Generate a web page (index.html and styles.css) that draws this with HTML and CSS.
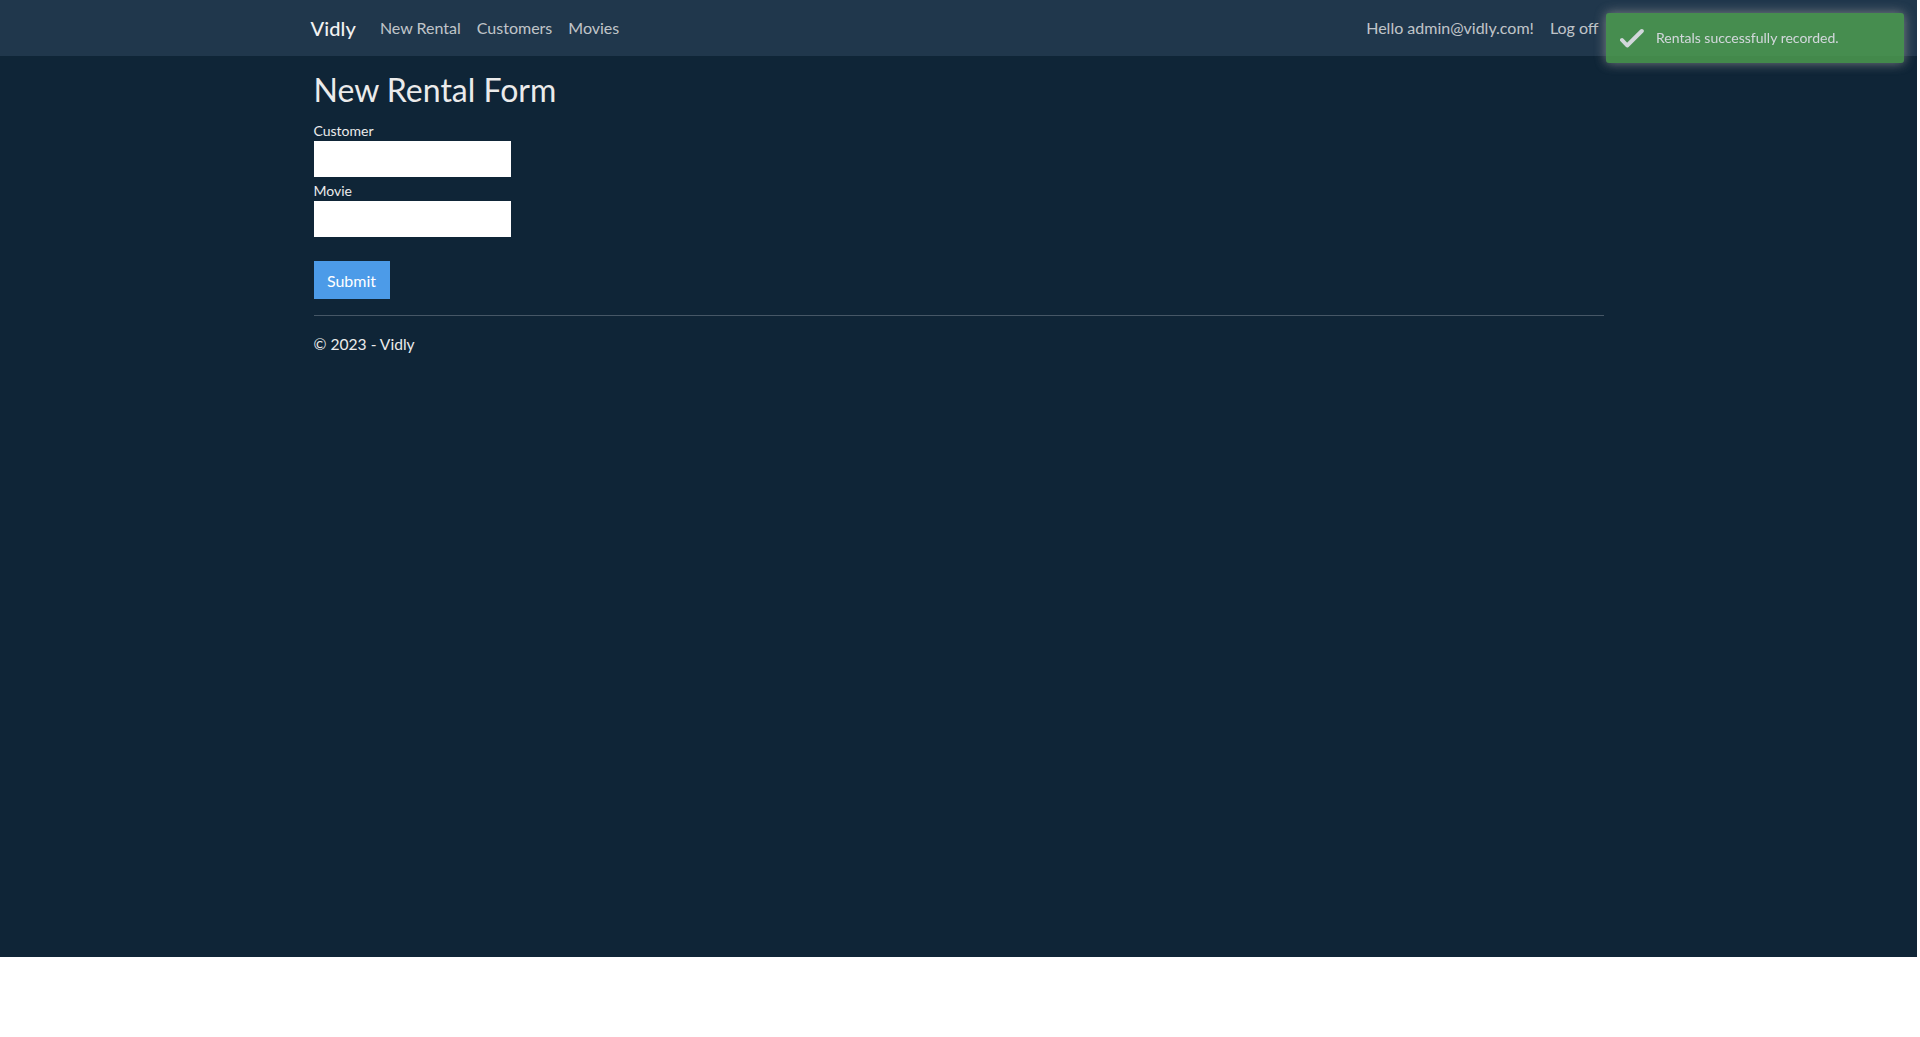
FILE: index.html
```html
<!DOCTYPE html>
<html lang="en">
<head>
<meta charset="utf-8">
<title>New Rental Form - Vidly</title>
<link rel="stylesheet" href="styles.css">
</head>
<body>
<div class="page">
  <nav class="navbar">
    <div class="nav-inner">
      <a class="brand" href="#">Vidly</a>
      <ul class="nav-links">
        <li><a href="#">New Rental</a></li>
        <li><a href="#">Customers</a></li>
        <li><a href="#">Movies</a></li>
      </ul>
      <ul class="nav-links nav-right">
        <li><a href="#">Hello admin@vidly.com!</a></li>
        <li><a href="#">Log off</a></li>
      </ul>
    </div>
  </nav>
  <main class="container">
    <h2 class="title">New Rental Form</h2>
    <form class="rental-form">
      <div class="field">
        <label for="customer">Customer</label>
        <input id="customer" type="text">
      </div>
      <div class="field">
        <label for="movie">Movie</label>
        <input id="movie" type="text">
      </div>
      <button type="button" class="btn-primary">Submit</button>
    </form>
    <hr class="rule">
    <footer class="footer">
      <p>© 2023 - Vidly</p>
    </footer>
  </main>
</div>
<div class="toast">
  <svg class="toast-icon" width="24" height="24" viewBox="0 0 24 24" aria-hidden="true">
    <polyline points="2,14 7.2,19.5 21.8,5" fill="none" stroke="#ffffff" stroke-width="4" stroke-linecap="round" stroke-linejoin="round"/>
  </svg>
  <span class="toast-text">Rentals successfully recorded.</span>
</div>
</body>
</html>
```

FILE: styles.css
```css
* { box-sizing: border-box; }

html, body {
  margin: 0;
  padding: 0;
  background: #ffffff;
}

body {
  font-family: Lato, "Open Sans", "Liberation Sans", sans-serif;
  font-size: 16px;
  line-height: 1.5;
  color: #ebebeb;
}

.page {
  width: 1917px;
  height: 957px;
  background: #0f2537;
}

/* Navbar */
.navbar {
  height: 56px;
  background: #20374c;
}

.nav-inner {
  width: 1290px;
  height: 100%;
  margin: 0 auto;
  display: flex;
  align-items: center;
}

.brand {
  font-size: 20px;
  color: #f2f2f2;
  text-decoration: none;
  margin-left: -3px;
  margin-right: 16px;
  font-weight: 500;
  letter-spacing: 0.1px;
}

.nav-links {
  list-style: none;
  margin: 0;
  padding: 0;
  display: flex;
}

.nav-links a {
  display: block;
  padding: 0 8px;
  color: rgba(235, 235, 235, 0.8);
  text-decoration: none;
  font-size: 16px;
}

.nav-right {
  margin-left: auto;
  margin-right: -3px;
}

/* Main content */
.container {
  width: 1290px;
  margin: 0 auto;
}

.title {
  margin: 15px 0 11px;
  font-size: 32px;
  font-weight: 400;
  line-height: 1.2;
  color: #ebebeb;
}

.field label {
  display: block;
  font-size: 14px;
  line-height: 21px;
  color: #ebebeb;
}

.field input {
  display: block;
  width: 197px;
  height: 36px;
  margin: 0;
  border: none;
  border-radius: 0;
  background: #ffffff;
  padding: 6px 12px;
  font-family: inherit;
  font-size: 16px;
}

.field + .field {
  margin-top: 3px;
}

.btn-primary {
  display: block;
  margin-top: 24px;
  width: 76px;
  height: 38px;
  border: none;
  border-radius: 0;
  background: #4c9be8;
  color: #ffffff;
  font-family: inherit;
  font-size: 16px;
  padding: 0;
  cursor: pointer;
}

.rule {
  margin: 16px 0 0;
  border: 0;
  border-top: 1px solid #465766;
  height: 0;
}

.footer p {
  margin: 17px 0 0;
  font-size: 15.6px;
  color: #ebebeb;
}

/* Toast notification (overlay) */
.toast {
  position: fixed;
  top: 13px;
  right: 16px;
  width: 298px;
  height: 50px;
  padding: 0 15px 0 50px;
  display: flex;
  align-items: center;
  background: #51a351;
  opacity: 0.8;
  border-radius: 3px;
  box-shadow: 0 0 12px #999999;
  color: #ffffff;
}

.toast-icon {
  position: absolute;
  left: 14px;
  top: 13px;
}

.toast-text {
  font-size: 14px;
  line-height: 20px;
}
```
